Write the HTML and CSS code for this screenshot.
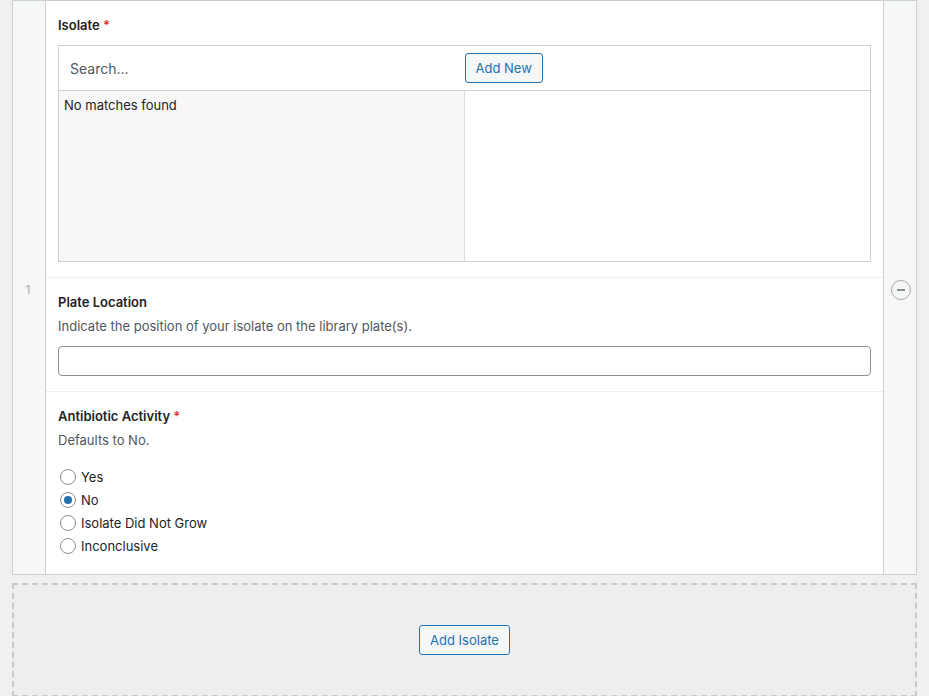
FILE: index.html
```html
<!DOCTYPE html>
<html>
<head>
    <title>Isolates</title>
    <link rel="stylesheet" href="styles.css">
</head>
<body>
    <div class="repeater">
        <div class="acf-row">
            <div class="row-handle order">1</div>

            <div class="row-fields">
                <div class="field">
                    <div class="label-wrap">
                        <label class="field-label">Isolate <span class="required">*</span></label>
                    </div>
                    <div class="relationship">
                        <div class="filters">
                            <div class="filter-search">
                                <input type="text" class="search-input" placeholder="Search...">
                            </div>
                            <div class="filter-actions">
                                <button class="button">Add New</button>
                            </div>
                        </div>
                        <div class="selection">
                            <div class="choices">
                                <p class="no-results">No matches found</p>
                            </div>
                            <div class="values"></div>
                        </div>
                    </div>
                </div>

                <div class="field">
                    <div class="label-wrap">
                        <label class="field-label">Plate Location</label>
                        <p class="description">Indicate the position of your isolate on the library plate(s).</p>
                    </div>
                    <input type="text" class="text-input">
                </div>

                <div class="field">
                    <div class="label-wrap">
                        <label class="field-label">Antibiotic Activity <span class="required">*</span></label>
                        <p class="description">Defaults to No.</p>
                    </div>
                    <ul class="radio-list">
                        <li><label><input type="radio" name="activity"> Yes</label></li>
                        <li><label><input type="radio" name="activity" checked> No</label></li>
                        <li><label><input type="radio" name="activity"> Isolate Did Not Grow</label></li>
                        <li><label><input type="radio" name="activity"> Inconclusive</label></li>
                    </ul>
                </div>
            </div>

            <div class="row-handle remove">
                <a href="#" class="remove-row" title="Remove row"></a>
            </div>
        </div>
    </div>

    <div class="add-area">
        <button class="button">Add Isolate</button>
    </div>
</body>
</html>
```

FILE: styles.css
```css
body {
    font-family: Inter, "Noto Sans", sans-serif;
    font-size: 13px;
    color: #1d2327;
    background-color: #f0f0f1;
    margin: 0;
    padding: 0 12px;
}

.repeater {
    border: 1px solid #ccd0d4;
    background-color: #fff;
}

.acf-row {
    display: flex;
}

.row-handle {
    width: 33px;
    box-sizing: border-box;
    flex-shrink: 0;
    display: flex;
    align-items: center;
    justify-content: center;
    background-color: #f6f7f7;
}

.row-handle.order {
    border-right: 1px solid #ccd0d4;
    color: #a7aaad;
    font-size: 12px;
    padding-top: 3px;
    padding-right: 2px;
}

.row-handle.remove {
    border-left: 1px solid #ccd0d4;
}

.remove-row {
    position: relative;
    display: block;
    width: 18px;
    height: 18px;
    border: 1px solid #a7aaad;
    border-radius: 50%;
    margin: 4px 0 0 2px;
}

.remove-row::after {
    content: "";
    position: absolute;
    left: 5px;
    top: 8px;
    width: 8px;
    height: 2px;
    background-color: #8c8f94;
}

.row-fields {
    flex: 1;
}

.field {
    padding: 15px 12px;
}

.field + .field {
    border-top: 1px solid #eeeeee;
}

.label-wrap {
    margin-bottom: 11px;
}

.field-label {
    display: block;
    font-weight: 600;
    line-height: 18px;
}

.required {
    color: #d63638;
}

.description {
    margin: 6px 0 0;
    line-height: 18px;
    color: #50575e;
}

.relationship {
    border: 1px solid #ccd0d4;
}

.filters {
    display: flex;
    height: 44px;
    border-bottom: 1px solid #ccd0d4;
}

.filter-search,
.filter-actions {
    flex: 1;
    display: flex;
    align-items: center;
}

.search-input {
    width: 100%;
    border: none;
    outline: none;
    padding: 0 11px;
    font-family: inherit;
    font-size: 14px;
    color: #1d2327;
}

.search-input::placeholder {
    color: #50575e;
}

.button {
    height: 30px;
    padding: 0 10px;
    font-family: inherit;
    font-size: 13px;
    color: #2271b1;
    background-color: #f6f7f7;
    border: 1px solid #2271b1;
    border-radius: 3px;
    cursor: pointer;
}

.selection {
    display: flex;
    height: 170px;
}

.choices {
    flex: 1;
    background-color: #f7f7f7;
    border-right: 1px solid #dcdcde;
}

.values {
    flex: 1;
}

.no-results {
    margin: 0;
    padding: 5px 5px;
    line-height: 18px;
}

.text-input {
    display: block;
    box-sizing: border-box;
    width: 100%;
    height: 30px;
    border: 1px solid #8c8f94;
    border-radius: 4px;
}

.radio-list {
    list-style: none;
    margin: 0;
    padding: 5px 0 2px;
}

.radio-list li {
    height: 23px;
    display: flex;
    align-items: center;
}

.radio-list label {
    display: flex;
    align-items: center;
}

.radio-list input {
    appearance: none;
    width: 16px;
    height: 16px;
    margin: 0 5px 0 2px;
    border: 1px solid #8c8f94;
    border-radius: 50%;
    background-color: #fff;
    display: flex;
    align-items: center;
    justify-content: center;
}

.radio-list input:checked::before {
    content: "";
    width: 8px;
    height: 8px;
    border-radius: 50%;
    background-color: #2271b1;
}

.add-area {
    margin-top: 8px;
    height: 110px;
    border: 2px dashed #c9c9c9;
    background-color: #eeeeee;
    display: flex;
    align-items: center;
    justify-content: center;
}
```
